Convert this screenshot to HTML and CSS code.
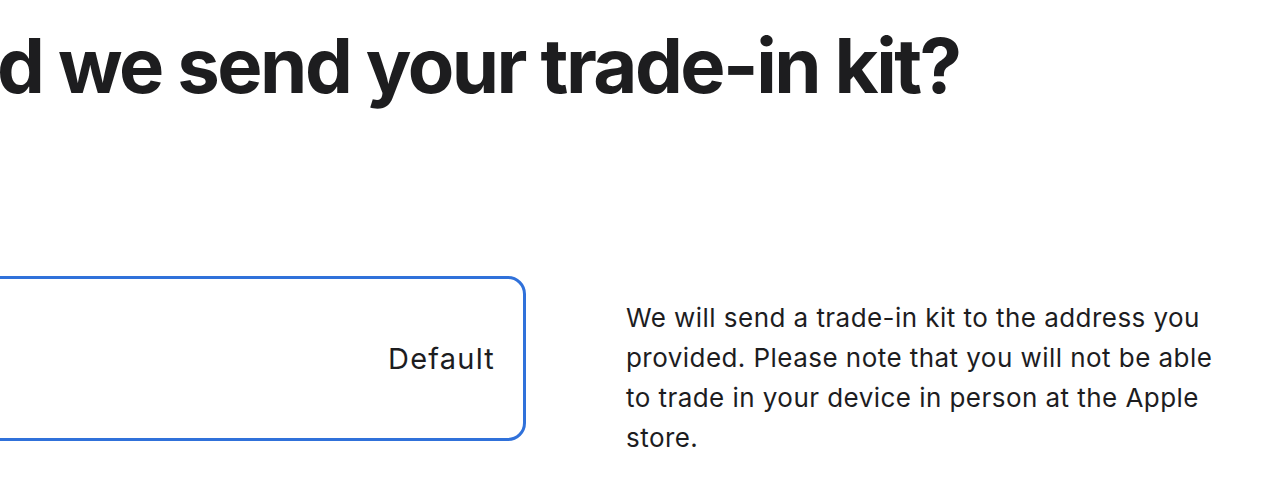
FILE: index.html
```html
<!DOCTYPE html>
<html lang="en">
<head>
  <meta charset="UTF-8" />
  <meta name="viewport" content="width=device-width, initial-scale=1.0"/>
  <title>Trade In - Shipping</title>
  <link rel="stylesheet" href="styles.css">
</head>
<body>
  <div class="page">
    <h1 class="headline">d we send your trade-in kit?</h1>

    <div class="shipping-row">
      <div class="option-card selected">
        <span class="option-label">Default</span>
      </div>
      <p class="shipping-note">
        We will send a trade-in kit to the address you provided. Please note that you will not be able to trade in your device in person at the Apple store.
      </p>
    </div>
  </div>
</body>
</html>
```

FILE: styles.css
```css
body {
  font-family: Inter, 'Noto Sans', sans-serif;
  background-color: #ffffff;
  color: #1d1d1f;
  margin: 0;
  overflow: hidden;
}
.page {
  width: 1264px;
  height: 488px;
  overflow: hidden;
}
.headline {
  margin: 0;
  padding-top: 24px;
  margin-left: -3px;
  font-size: 76px;
  font-weight: 700;
  line-height: 1.1;
  letter-spacing: -2.5px;
  white-space: nowrap;
}
.shipping-row {
  display: flex;
  align-items: flex-start;
  gap: 100px;
  margin-top: 168px;
}
.option-card {
  flex: none;
  width: 566px;
  height: 165px;
  margin-left: -40px;
  box-sizing: border-box;
  border: 3px solid #d2d2d7;
  border-radius: 18px;
  display: flex;
  align-items: center;
  justify-content: flex-end;
  padding-right: 28px;
}
.option-card.selected {
  border-color: #3071da;
}
.option-label {
  font-size: 29px;
  letter-spacing: 1.2px;
}
.shipping-note {
  margin: 22px 0 0;
  max-width: 600px;
  font-size: 26px;
  line-height: 40px;
  letter-spacing: 0.45px;
}
```
